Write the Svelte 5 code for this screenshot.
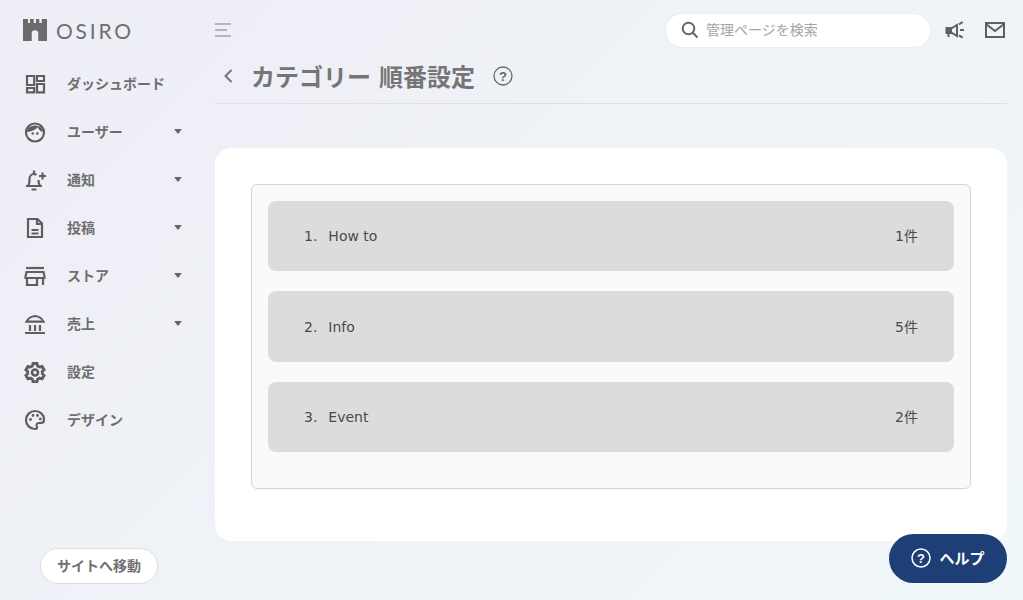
<script lang="ts">
  const navItems = [
    { label: 'ダッシュボード', icon: 'dashboard', caret: false },
    { label: 'ユーザー', icon: 'user', caret: true },
    { label: '通知', icon: 'bell', caret: true },
    { label: '投稿', icon: 'doc', caret: true },
    { label: 'ストア', icon: 'store', caret: true },
    { label: '売上', icon: 'bank', caret: true },
    { label: '設定', icon: 'gear', caret: false },
    { label: 'デザイン', icon: 'palette', caret: false }
  ];

  const categories = [
    { name: 'How to', count: 1 },
    { name: 'Info', count: 5 },
    { name: 'Event', count: 2 }
  ];
</script>

<div class="page">
  <aside class="sidebar">
    <div class="logo">
      <svg width="24" height="22" viewBox="0 0 24 22">
        <path fill="#6b6b6b" d="M0 0h5v4h2V0h3.700v4H13V0h3.300v4h2.400V0H24v22h-8.700v-7.500a3.300 3.300 0 0 0-6.600 0V22H0Z" />
      </svg>
      <span class="logo-text">OSIRO</span>
    </div>

    <nav class="nav">
      {#each navItems as item}
        <div class="nav-item">
          <span class="nav-icon">
            <svg width="24" height="24" viewBox="0 0 24 24" fill="none" stroke="#5f5f5f" stroke-width="2.200">
              {#if item.icon === 'dashboard'}
                <path d="M4 4h7.200v9H4ZM14 4h7v5h-7ZM14 12h7v8.300h-7ZM4 16h7.200v4.300H4Z" />
              {:else if item.icon === 'user'}
                <circle cx="12" cy="12.500" r="9" />
                <path fill="#5f5f5f" stroke="none" d="M3.500 11.500A9 9 0 0 1 20.500 11.500H18C16.500 10.500 15.500 9 14.700 7.300 12.500 9.800 9 11.500 5 12Z" />
                <circle cx="9.700" cy="13.500" r="1.300" fill="#5f5f5f" stroke="none" />
                <circle cx="14.300" cy="13.500" r="1.300" fill="#5f5f5f" stroke="none" />
              {:else if item.icon === 'bell'}
                <path d="M3 18h16M5 18c1.500-1.500 1.500-4 1.500-7 0-3 2-5 4.500-5 1 0 1.800.3 2.500.8M15.500 12c0 2.500.3 4.500 1.500 6" />
                <path d="M11 2.500V6M8.500 21.500h5M19.500 4.500v7M16 8h7" />
              {:else if item.icon === 'doc'}
                <path d="M5 3h9.500L19 7.500V21H5Z" />
                <path d="M14 3v5h5M8.500 14h7M8.500 17.500h7" />
              {:else if item.icon === 'store'}
                <path d="M3 4h18" />
                <path d="M3.500 8h17l1 4.500V14h-19v-1.500ZM4 14v7h10v-7M20 14v7" />
              {:else if item.icon === 'bank'}
                <path d="M3.500 9.700C5 6.500 8 4.500 12 4c4 .5 7 2.500 8.500 5.700ZM7 13v6M12 13v6M17 13v6M2 21h20" />
              {:else if item.icon === 'gear'}
                <circle cx="12" cy="12.500" r="3" stroke-width="2.600" />
                <path stroke-width="2.800" d="M10 3.500h4l.6 2.500 2 1.100 2.500-.8 2 3.400-1.900 1.700.1 2.300 1.800 1.700-2 3.400-2.500-.8-2 1.200-.6 2.500h-4l-.6-2.500-2-1.200-2.500.8-2-3.400 1.800-1.700v-2.300L2.900 9.700l2-3.400 2.500.8 2-1.100Z" />
              {:else}
                <path d="M12 3a9 9 0 1 0 0 18c2 0 2.500-1.500 1.800-2.700-.8-1.500 0-3.300 2-3.300H18c2 0 3-1.500 3-3.500C21 6.500 17 3 12 3Z" />
                <circle cx="7.500" cy="11.500" r="1.400" fill="#5f5f5f" stroke="none" />
                <circle cx="10" cy="7.500" r="1.400" fill="#5f5f5f" stroke="none" />
                <circle cx="14.500" cy="7.500" r="1.400" fill="#5f5f5f" stroke="none" />
                <circle cx="17.300" cy="11" r="1.400" fill="#5f5f5f" stroke="none" />
              {/if}
            </svg>
          </span>
          <span class="nav-label">{item.label}</span>
          {#if item.caret}
            <span class="caret"></span>
          {/if}
        </div>
      {/each}
    </nav>

    <div class="sidebar-footer">
      <button class="site-btn">サイトへ移動</button>
    </div>
  </aside>

  <main class="main">
    <div class="topbar">
      <svg class="menu" width="16" height="14" viewBox="0 0 16 14" fill="none" stroke="#a3a3a3" stroke-width="1.500">
        <path d="M0 1h16M0 7h12M0 13h16" />
      </svg>
      <div class="search">
        <svg width="18" height="18" viewBox="0 0 18 18" fill="none" stroke="#666" stroke-width="2">
          <circle cx="7.500" cy="7.500" r="5.800" />
          <path d="m11.800 11.800 4.700 4.700" />
        </svg>
        <span class="placeholder">管理ページを検索</span>
      </div>
      <svg class="top-icon" width="22" height="18" viewBox="0 0 22 18" fill="none" stroke="#5f5f5f" stroke-width="2">
        <path d="M1.500 7h5.500l5-3v11l-5-3H1.500Z" />
        <path fill="#5f5f5f" stroke="none" d="M1.500 7h5.500v5H1.500Z" />
        <path d="M3.500 12v4M14 3.300 17.700 1M15 9h4M14 14.300l3.700 2.400" />
      </svg>
      <svg class="top-icon mail" width="20" height="16" viewBox="0 0 20 16" fill="none" stroke="#5f5f5f" stroke-width="2">
        <path d="M1 1h18v14H1Z" />
        <path d="m1 2 9 7 9-7" />
      </svg>
    </div>

    <header class="title-row">
      <svg class="back" width="10" height="16" viewBox="0 0 10 16" fill="none" stroke="#757575" stroke-width="2">
        <path d="M8.500 2 2.500 8l6 6" />
      </svg>
      <h1>カテゴリー 順番設定</h1>
      <svg class="help-icon" width="20" height="20" viewBox="0 0 20 20">
        <circle cx="10" cy="10" r="9" fill="none" stroke="#666" stroke-width="1.300" />
        <text x="10" y="14.500" text-anchor="middle" font-size="13" font-weight="700" fill="#666" font-family="'Liberation Sans', sans-serif">?</text>
      </svg>
    </header>

    <section class="card">
      <div class="list">
        {#each categories as cat, i}
          <div class="row">
            <span class="name"><span class="num">{i + 1}.</span>{cat.name}</span>
            <span class="count">{cat.count}件</span>
          </div>
        {/each}
      </div>
    </section>
  </main>

  <button class="help-btn">
    <svg width="20" height="20" viewBox="0 0 20 20">
      <circle cx="10" cy="10" r="9" fill="none" stroke="#fff" stroke-width="1.500" />
      <text x="10" y="14.500" text-anchor="middle" font-size="13" font-weight="700" fill="#fff" font-family="'Liberation Sans', sans-serif">?</text>
    </svg>
    ヘルプ
  </button>
</div>

<style>
  :global(body) {
    margin: 0;
  }

  .page {
    display: flex;
    height: 600px;
    overflow: hidden;
    background: linear-gradient(135deg, #eeeef6, #f0f7f9);
    font-family: "Noto Sans CJK JP", "Noto Sans", sans-serif;
    color: #666;
  }

  .sidebar {
    display: flex;
    flex-direction: column;
    flex: 0 0 215px;
    box-sizing: border-box;
    padding-bottom: 16px;
  }

  .logo {
    display: flex;
    align-items: center;
    gap: 9px;
    height: 60px;
    padding-left: 23px;
  }

  .logo-text {
    font-family: "Lato", sans-serif;
    font-size: 21px;
    letter-spacing: 2.800px;
    color: #6f6f6f;
    line-height: 1;
  }

  .nav-item {
    display: flex;
    align-items: center;
    height: 48px;
    padding-left: 23px;
    padding-right: 33px;
  }

  .nav-icon {
    display: flex;
    flex: 0 0 44px;
  }

  .nav-label {
    flex: 1;
    padding-bottom: 3px;
    font-size: 14px;
    font-weight: 700;
    color: #6e6e6e;
  }

  .caret {
    width: 0;
    height: 0;
    margin-bottom: 2px;
    border-left: 4.500px solid transparent;
    border-right: 4.500px solid transparent;
    border-top: 5px solid #666;
  }

  .sidebar-footer {
    margin-top: auto;
    padding-left: 40px;
  }

  .site-btn {
    width: 118px;
    height: 36px;
    padding: 0 0 2px;
    border: 1px solid #dedede;
    border-radius: 18px;
    background: #fff;
    font-family: inherit;
    font-size: 14px;
    font-weight: 700;
    color: #707070;
  }

  .main {
    flex: 1;
    min-width: 0;
    padding-right: 16px;
  }

  .topbar {
    display: flex;
    align-items: center;
    height: 60px;
  }

  .menu {
    margin-right: auto;
  }

  .search {
    display: flex;
    align-items: center;
    gap: 7px;
    box-sizing: border-box;
    width: 266px;
    height: 35px;
    padding-left: 15px;
    border-radius: 18px;
    border: 1px solid #ebecf0;
    background: #fff;
  }

  .placeholder {
    padding-bottom: 2px;
    font-size: 14px;
    color: #a5a5a5;
  }

  .top-icon {
    margin-left: 14px;
  }

  .mail {
    margin-right: 2px;
    margin-left: 18px;
  }

  .title-row {
    display: flex;
    align-items: center;
    box-sizing: border-box;
    height: 44px;
    padding-bottom: 11px;
    border-bottom: 1px solid #dfe0e4;
  }

  .back {
    margin-left: 8px;
  }

  h1 {
    margin: 0 18px;
    font-size: 24px;
    word-spacing: 2.500px;
    font-weight: 700;
    color: #757575;
    line-height: 1;
  }

  .card {
    margin-top: 44px;
    box-sizing: border-box;
    height: 393px;
    padding: 36px;
    border-radius: 16px;
    background: #fff;
  }

  .list {
    display: flex;
    flex-direction: column;
    gap: 20px;
    box-sizing: border-box;
    height: 305px;
    padding: 16px;
    border: 1px solid #d4d4d4;
    border-radius: 6px;
    background: #fafafa;
  }

  .row {
    display: flex;
    align-items: center;
    justify-content: space-between;
    flex: 0 0 70.400px;
    padding: 0 36px;
    border-radius: 8px;
    background: #dcdcdc;
    font-family: "DejaVu Sans", "Noto Sans CJK JP", sans-serif;
    font-size: 14px;
    line-height: 20px;
    color: #4a4a4a;
  }

  .num {
    margin-right: 11px;
  }

  .help-btn {
    position: fixed;
    right: 16px;
    bottom: 17px;
    display: flex;
    align-items: center;
    justify-content: center;
    gap: 8px;
    width: 118px;
    height: 49px;
    padding: 0 0 2px;
    border: 0;
    border-radius: 25px;
    background: #1e3f75;
    color: #fff;
    font-family: inherit;
    font-size: 15px;
    font-weight: 700;
  }
</style>
